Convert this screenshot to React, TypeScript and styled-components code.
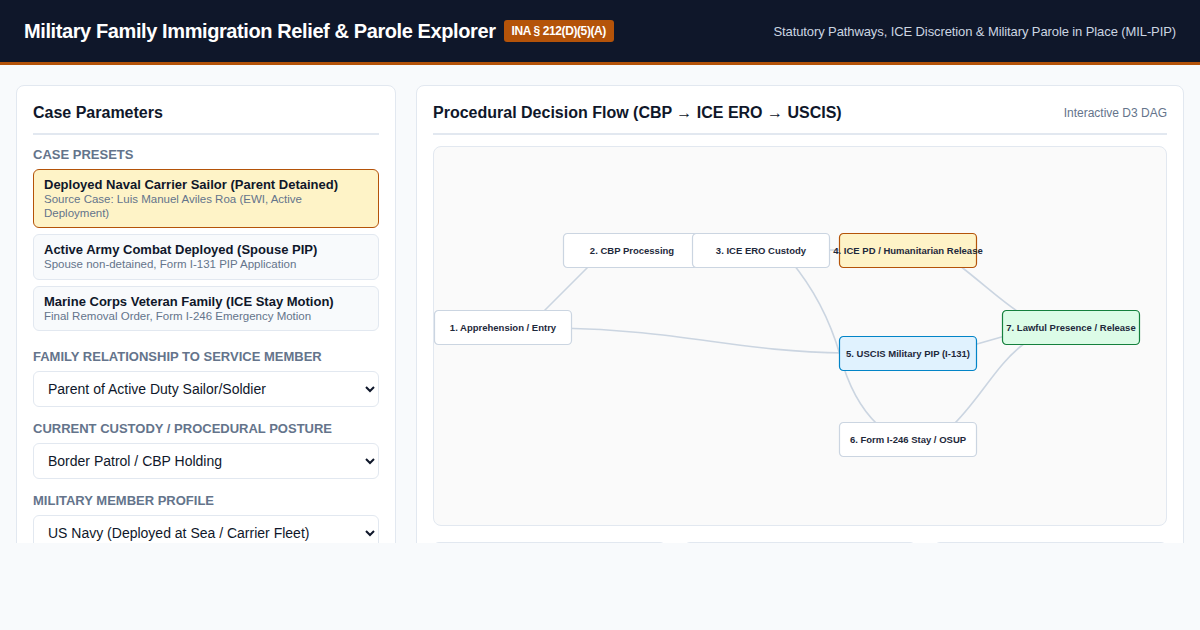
import React, { useState } from 'react';
import styled, { createGlobalStyle } from 'styled-components';

const GlobalStyle = createGlobalStyle`
  * { box-sizing: border-box; }
  html, body {
    margin: 0;
    padding: 0;
    background: #f8fafc;
    font-family: "Liberation Sans", Arial, sans-serif;
    color: #0f172a;
    overflow: hidden;
  }
`;

const Header = styled.header`
  height: 65px;
  background: #0f172a;
  border-bottom: 3px solid #b45309;
  display: flex;
  align-items: center;
  justify-content: space-between;
  padding: 0 24px;
`;

const Brand = styled.div`
  display: flex;
  align-items: center;
  gap: 8px;
`;

const Title = styled.h1`
  margin: 0;
  font-size: 20px;
  font-weight: 700;
  letter-spacing: -0.4px;
  color: #ffffff;
`;

const Badge = styled.span`
  background: #b45309;
  color: #ffffff;
  font-size: 12px;
  font-weight: 700;
  letter-spacing: -0.4px;
  padding: 0 8px;
  height: 22px;
  line-height: 22px;
  border-radius: 3px;
`;

const Tagline = styled.div`
  font-size: 13px;
  color: #cbd5e1;
  letter-spacing: -0.1px;
`;

const Main = styled.main`
  height: 478px;
  overflow: hidden;
  display: grid;
  grid-template-columns: 380px 1fr;
  gap: 20px;
  padding: 20px 16px 0;
  align-items: start;
`;

const Panel = styled.section`
  background: #ffffff;
  border: 1px solid #e2e8f0;
  border-radius: 8px;
  padding: 16px;
`;

const PanelHead = styled.div<{ $gap?: number }>`
  display: flex;
  align-items: center;
  justify-content: space-between;
  padding-bottom: 9px;
  border-bottom: 2px solid #e2e8f0;
  margin-bottom: ${(p) => p.$gap ?? 12}px;
`;

const PanelTitle = styled.h2`
  margin: 0;
  font-size: 16px;
  line-height: 22px;
  font-weight: 700;
  color: #0f172a;
`;

const PanelNote = styled.span`
  font-size: 12px;
  color: #64748b;
`;

const Label = styled.div`
  font-size: 13px;
  font-weight: 700;
  color: #64748b;
  text-transform: uppercase;
  line-height: 16px;
  margin-bottom: 6px;
`;

const Presets = styled.div`
  display: flex;
  flex-direction: column;
  gap: 6px;
  margin-bottom: 18px;
`;

const Preset = styled.button<{ $active?: boolean }>`
  all: unset;
  display: block;
  padding: 7px 10px;
  border-radius: 6px;
  border: 1px solid ${(p) => (p.$active ? '#b45309' : '#e2e8f0')};
  background: ${(p) => (p.$active ? '#fef3c7' : '#f8fafc')};
  cursor: pointer;
`;

const PresetName = styled.div`
  font-size: 13px;
  font-weight: 700;
  line-height: 16px;
  color: #0f172a;
`;

const PresetSub = styled.div`
  font-size: 11.5px;
  line-height: 13.5px;
  color: #64748b;
`;

const Field = styled.div`
  margin-bottom: 14px;
`;

const Select = styled.select`
  width: 100%;
  height: 36px;
  border: 1px solid #e2e8f0;
  border-radius: 6px;
  background: #ffffff;
  font-family: "Liberation Sans", Arial, sans-serif;
  font-size: 14px;
  color: #0f172a;
  padding: 0 10px;
`;

const Graph = styled.div`
  height: 380px;
  background: #fafafa;
  border: 1px solid #e2e8f0;
  border-radius: 8px;
  overflow: hidden;
`;

const Cards = styled.div`
  display: grid;
  grid-template-columns: repeat(3, 1fr);
  gap: 18px;
  margin-top: 16px;
`;

const StatCard = styled.div`
  background: #f8fafc;
  border: 1px solid #e2e8f0;
  border-radius: 6px;
  min-height: 80px;
`;

type Node = { id: string; label: string; x: number; y: number; kind?: 'warn' | 'info' | 'ok' };

const nodes: Node[] = [
  { id: 'n1', label: '1. Apprehension / Entry', x: 0, y: 163 },
  { id: 'n2', label: '2. CBP Processing', x: 129, y: 86 },
  { id: 'n3', label: '3. ICE ERO Custody', x: 258, y: 86 },
  { id: 'n4', label: '4. ICE PD / Humanitarian Release', x: 405, y: 86, kind: 'warn' },
  { id: 'n5', label: '5. USCIS Military PIP (I-131)', x: 405, y: 189, kind: 'info' },
  { id: 'n6', label: '6. Form I-246 Stay / OSUP', x: 405, y: 275 },
  { id: 'n7', label: '7. Lawful Presence / Release', x: 568, y: 163, kind: 'ok' },
];

// hand-placed curves, drawn under the nodes
const edges = [
  'M96,178 Q126,148 166,108',
  'M126,181 C246,183 306,205 411,206',
  'M356,113 C381,143 396,173 406,208 C414,238 428,263 444,278',
  'M328,103 L474,103',
  'M521,115 C551,138 566,153 586,166',
  'M536,199 L571,189',
  'M516,281 C546,253 561,218 591,196',
];

const palette = {
  warn: { fill: '#fef3c7', stroke: '#b45309' },
  info: { fill: '#e0f2fe', stroke: '#0284c7' },
  ok: { fill: '#dcfce7', stroke: '#15803d' },
  base: { fill: '#ffffff', stroke: '#cbd5e1' },
};

const presets = [
  {
    name: 'Deployed Naval Carrier Sailor (Parent Detained)',
    sub: 'Source Case: Luis Manuel Aviles Roa (EWI, Active Deployment)',
  },
  { name: 'Active Army Combat Deployed (Spouse PIP)', sub: 'Spouse non-detained, Form I-131 PIP Application' },
  { name: 'Marine Corps Veteran Family (ICE Stay Motion)', sub: 'Final Removal Order, Form I-246 Emergency Motion' },
];

const FlowDiagram: React.FC = () => (
  <svg width="732" height="378" viewBox="0 0 732 378" style={{ display: 'block' }}>
    {edges.map((d, i) => (
      <path key={i} d={d} fill="none" stroke="#cbd5e1" strokeWidth={1.6} />
    ))}
    {nodes.map((n) => {
      const c = palette[n.kind ?? 'base'];
      return (
        <g key={n.id} transform={`translate(${n.x},${n.y})`}>
          <rect x={0.5} y={0.5} width={137} height={34} rx={4} fill={c.fill} stroke={c.stroke} strokeWidth={1.2} />
          <text
            x={69}
            y={20.5}
            textAnchor="middle"
            fontFamily='"Liberation Sans", Arial, sans-serif'
            fontSize={9.5}
            fontWeight={700}
            fill="#1e293b"
          >
            {n.label}
          </text>
        </g>
      );
    })}
  </svg>
);

export default function App() {
  const [active, setActive] = useState(0);

  return (
    <>
      <GlobalStyle />
      <Header>
        <Brand>
          <Title>Military Family Immigration Relief &amp; Parole Explorer</Title>
          <Badge>INA § 212(D)(5)(A)</Badge>
        </Brand>
        <Tagline>Statutory Pathways, ICE Discretion &amp; Military Parole in Place (MIL-PIP)</Tagline>
      </Header>

      <Main>
        <Panel>
          <PanelHead>
            <PanelTitle>Case Parameters</PanelTitle>
          </PanelHead>

          <Label>Case Presets</Label>
          <Presets>
            {presets.map((p, i) => (
              <Preset key={p.name} $active={i === active} onClick={() => setActive(i)}>
                <PresetName>{p.name}</PresetName>
                <PresetSub>{p.sub}</PresetSub>
              </Preset>
            ))}
          </Presets>

          <Field>
            <Label>Family Relationship to Service Member</Label>
            <Select defaultValue="parent">
              <option value="parent">Parent of Active Duty Sailor/Soldier</option>
              <option value="spouse">Spouse of Active Duty Member</option>
              <option value="child">Child of Active Duty Member</option>
            </Select>
          </Field>

          <Field>
            <Label>Current Custody / Procedural Posture</Label>
            <Select defaultValue="cbp">
              <option value="cbp">Border Patrol / CBP Holding</option>
              <option value="ice">ICE ERO Detention</option>
              <option value="free">Non-detained</option>
            </Select>
          </Field>

          <Field>
            <Label>Military Member Profile</Label>
            <Select defaultValue="navy">
              <option value="navy">US Navy (Deployed at Sea / Carrier Fleet)</option>
              <option value="army">US Army (Combat Deployment)</option>
              <option value="usmc">US Marine Corps (Veteran)</option>
            </Select>
          </Field>
        </Panel>

        <Panel>
          <PanelHead $gap={11}>
            <PanelTitle>Procedural Decision Flow (CBP → ICE ERO → USCIS)</PanelTitle>
            <PanelNote>Interactive D3 DAG</PanelNote>
          </PanelHead>
          <Graph>
            <FlowDiagram />
          </Graph>
          <Cards>
            <StatCard />
            <StatCard />
            <StatCard />
          </Cards>
        </Panel>
      </Main>
    </>
  );
}
